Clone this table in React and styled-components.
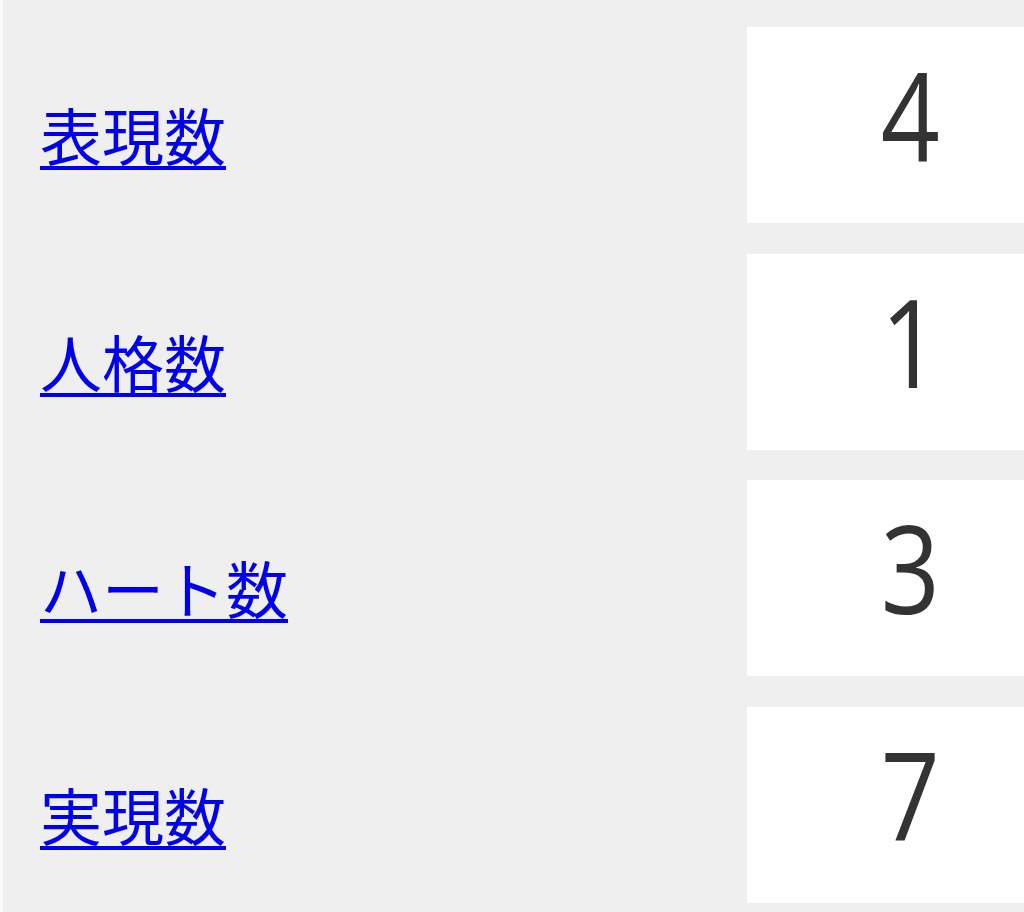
import React from "react";
import styled, { createGlobalStyle } from "styled-components";

const GlobalStyle = createGlobalStyle`
  html, body {
    margin: 0;
    padding: 0;
    background: #fafafa;
    overflow: hidden;
  }
  body {
    font-family: "Noto Sans", "Noto Sans CJK JP", sans-serif;
  }
`;

const Page = styled.main`
  margin-left: 3px;
  width: 1070px;
  min-height: 912px;
  background: #efefef;
  padding-top: 27px;
  box-sizing: border-box;
`;

const StatList = styled.dl`
  margin: 0;
  display: grid;
  grid-template-columns: 1fr 326px;
  align-items: baseline;
  row-gap: 30.67px;
`;

const Label = styled.dt`
  margin: 0;
  padding-left: 37px;
  font-family: "Noto Sans CJK JP", "Noto Sans", sans-serif;
  font-size: 62px;
  line-height: 1.2;
`;

const LabelLink = styled.a`
  color: #0000ee;
  text-decoration: underline;
  text-decoration-thickness: 4px;
  text-underline-offset: 5px;
`;

const Value = styled.dd`
  margin: 0;
  height: 196px;
  box-sizing: border-box;
  padding-top: 25px;
  background: #ffffff;
  color: #333333;
  font-family: "Open Sans", "Noto Sans", sans-serif;
  font-weight: 500;
  font-size: 123px;
  line-height: 1;
  text-align: center;
`;

const Digit = styled.span`
  display: inline-block;
  transform: scaleX(0.84);
`;

const stats = [
  { label: "表現数", value: 4 },
  { label: "人格数", value: 1 },
  { label: "ハート数", value: 3 },
  { label: "実現数", value: 7 },
];

export default function App() {
  return (
    <>
      <GlobalStyle />
      <Page>
        <StatList>
          {stats.map((s) => (
            <React.Fragment key={s.label}>
              <Label>
                <LabelLink href="#">{s.label}</LabelLink>
              </Label>
              <Value>
                <Digit>{s.value}</Digit>
              </Value>
            </React.Fragment>
          ))}
        </StatList>
      </Page>
    </>
  );
}
